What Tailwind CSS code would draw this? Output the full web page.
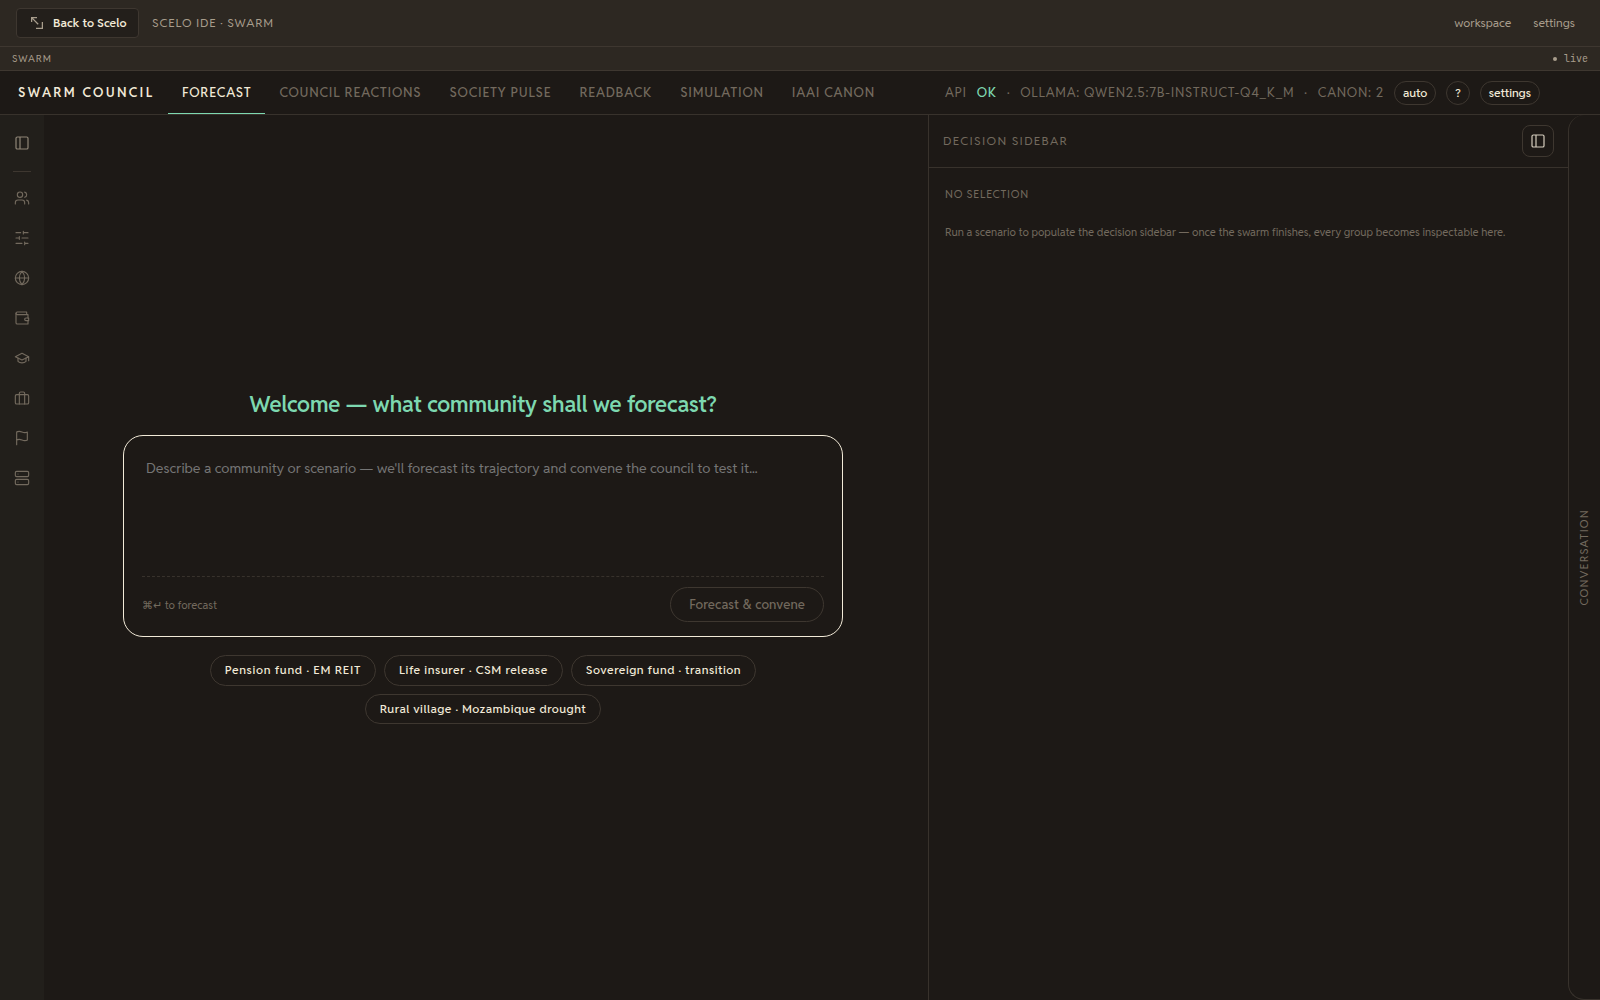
<!DOCTYPE html>
<html lang="en">
<head>
  <meta charset="UTF-8">
  <meta name="viewport" content="width=device-width, initial-scale=1.0">
  <title>Scelo IDE · Swarm</title>
  <script src="https://cdn.jsdelivr.net/npm/@tailwindcss/browser@4"></script>
</head>
<body class="h-screen overflow-hidden flex flex-col bg-[#1d1916] text-[#f2ead8] font-['Reddit_Sans','Roboto',sans-serif] text-xs">

  <!-- App header -->
  <header class="h-[47px] shrink-0 flex items-center justify-between bg-[#2d2822] border-b border-[#3e3730] pl-4 pr-[25px] text-[#a89d8c]">
    <div class="flex items-center gap-[13px]">
      <button class="h-[30px] w-[123px] flex items-center gap-[10px] pl-[14px] rounded border border-[#3e3730] bg-[#231f1b] text-[#f2ead8] font-semibold tracking-[0.005em]">
        <svg class="size-3 shrink-0" viewBox="0 0 12 12" fill="none" stroke="#a89d8c" stroke-width="1.3"><path d="M.6 5V.6H6M.9.9l6.3 6.3M11.4 5v6.4H5"/></svg>
        Back to Scelo
      </button>
      <span class="tracking-[0.067em]">SCELO IDE · SWARM</span>
    </div>
    <nav class="flex gap-[22px]">
      <a>workspace</a>
      <a>settings</a>
    </nav>
  </header>

  <div class="h-6 shrink-0 flex items-center justify-between bg-[#2d2822] border-b border-[#3e3730] px-3 text-[10px] text-[#a89d8c]">
    <span class="tracking-[0.08em]">SWARM</span>
    <span class="flex items-center gap-[7px] font-['JetBrains_Mono','Liberation_Mono',monospace]"><i class="size-1 rounded-full bg-[#a89d8c] mt-[2px]"></i>live</span>
  </div>

  <!-- Council tabs and status -->
  <div class="h-11 shrink-0 flex items-center justify-between border-b border-[#38322c] pl-[18px] pr-[60px] text-[13px] text-[#736a5e]">
    <div class="flex items-center h-full">
      <h1 class="w-[150px] font-semibold tracking-[0.176em] text-[#f2ead8]">SWARM COUNCIL</h1>
      <nav class="flex h-full font-medium tracking-[0.06em]">
        <a class="flex items-center px-[14px] pt-px border-b border-[#7dd8b0] text-[#f2ead8]">FORECAST</a>
        <a class="flex items-center px-[14px]">COUNCIL REACTIONS</a>
        <a class="flex items-center px-[14px]">SOCIETY PULSE</a>
        <a class="flex items-center px-[14px]">READBACK</a>
        <a class="flex items-center px-[14px]">SIMULATION</a>
        <a class="flex items-center px-[14px]">IAAI CANON</a>
      </nav>
    </div>
    <div class="flex items-center gap-[10px] tracking-[0.057em]">
      <span>API</span>
      <span class="font-medium text-[#7dd8b0]">OK</span>
      <span>·</span>
      <span>OLLAMA: QWEN2.5:7B-INSTRUCT-Q4_K_M</span>
      <span>·</span>
      <span>CANON: 2</span>
      <button class="h-6 px-2 rounded-full border border-[#3e3730] text-xs font-medium tracking-normal text-[#f2ead8]">auto</button>
      <button class="h-6 px-2 rounded-full border border-[#3e3730] text-xs font-medium tracking-normal text-[#f2ead8]">?</button>
      <button class="h-6 px-2 rounded-full border border-[#3e3730] text-xs font-medium tracking-normal text-[#f2ead8]">settings</button>
    </div>
  </div>

  <div class="flex-1 min-h-0 flex">
    <!-- Icon rail -->
    <aside class="w-11 shrink-0 flex flex-col items-center bg-[#221f1b] pt-3 text-[#736a5e]">
      <button class="size-8 grid place-items-center text-[#8f8577]">
        <svg class="size-4" viewBox="0 0 24 24" fill="none" stroke="currentColor" stroke-width="1.8"><rect x="3" y="3" width="18" height="18" rx="2"/><path d="M9 3v18"/></svg>
      </button>
      <div class="w-[18px] h-px bg-[#3e3730] mt-3 mb-[10px]"></div>
      <div class="flex flex-col gap-2">
        <button class="size-8 grid place-items-center">
          <svg class="size-4" viewBox="0 0 24 24" fill="none" stroke="currentColor" stroke-width="1.7" stroke-linecap="round" stroke-linejoin="round"><path d="M16 21v-2a4 4 0 0 0-4-4H6a4 4 0 0 0-4 4v2"/><circle cx="9" cy="7" r="4"/><path d="M22 21v-2a4 4 0 0 0-3-3.87M16 3.13a4 4 0 0 1 0 7.75"/></svg>
        </button>
        <button class="size-8 grid place-items-center">
          <svg class="size-4" viewBox="0 0 24 24" fill="none" stroke="currentColor" stroke-width="1.7" stroke-linecap="round" stroke-linejoin="round"><path d="M21 4h-7M10 4H3M21 12h-9M8 12H3M21 20h-5M12 20H3M14 2v4M8 10v4M16 18v4"/></svg>
        </button>
        <button class="size-8 grid place-items-center">
          <svg class="size-4" viewBox="0 0 24 24" fill="none" stroke="currentColor" stroke-width="1.7" stroke-linecap="round" stroke-linejoin="round"><circle cx="12" cy="12" r="10"/><path d="M12 2a14.5 14.5 0 0 0 0 20 14.5 14.5 0 0 0 0-20M2 12h20"/></svg>
        </button>
        <button class="size-8 grid place-items-center">
          <svg class="size-4" viewBox="0 0 24 24" fill="none" stroke="currentColor" stroke-width="1.7" stroke-linecap="round" stroke-linejoin="round"><path d="M21 12V7H5a2 2 0 0 1 0-4h14v4"/><path d="M3 5v14a2 2 0 0 0 2 2h16v-5"/><path d="M18 12a2 2 0 0 0 0 4h4v-4Z"/></svg>
        </button>
        <button class="size-8 grid place-items-center">
          <svg class="size-4" viewBox="0 0 24 24" fill="none" stroke="currentColor" stroke-width="1.7" stroke-linecap="round" stroke-linejoin="round"><path d="M22 10v6M2 10l10-5 10 5-10 5z"/><path d="M6 12v5c3 3 9 3 12 0v-5"/></svg>
        </button>
        <button class="size-8 grid place-items-center">
          <svg class="size-4" viewBox="0 0 24 24" fill="none" stroke="currentColor" stroke-width="1.7" stroke-linecap="round" stroke-linejoin="round"><rect x="2" y="7" width="20" height="14" rx="2"/><path d="M16 21V5a2 2 0 0 0-2-2h-4a2 2 0 0 0-2 2v16"/></svg>
        </button>
        <button class="size-8 grid place-items-center">
          <svg class="size-4" viewBox="0 0 24 24" fill="none" stroke="currentColor" stroke-width="1.7" stroke-linecap="round" stroke-linejoin="round"><path d="M4 15s1-1 4-1 5 2 8 2 4-1 4-1V3s-1 1-4 1-5-2-8-2-4 1-4 1zM4 22v-7"/></svg>
        </button>
        <button class="size-8 grid place-items-center">
          <svg class="size-4" viewBox="0 0 24 24" fill="none" stroke="currentColor" stroke-width="1.7" stroke-linecap="round" stroke-linejoin="round"><rect x="2" y="2" width="20" height="8" rx="2"/><rect x="2" y="14" width="20" height="8" rx="2"/><path d="M6 6h.01M6 18h.01"/></svg>
        </button>
      </div>
    </aside>

    <!-- Forecast prompt -->
    <main class="flex-1 min-w-0 flex flex-col items-center pt-[273px] pr-[6px]">
      <h2 class="text-[22px] leading-8 font-semibold tracking-[-0.005em] text-[#7dd8b0]">Welcome — what community shall we forecast?</h2>
      <div class="mt-[15px] w-[720px] h-[202px] flex flex-col rounded-[20px] border border-[#f2ead8] px-[18px] pb-[14px]">
        <div class="flex-1 pt-[22px] pl-1 text-sm leading-[21px] text-[#757575]">Describe a community or scenario — we'll forecast its trajectory and convene the council to test it...</div>
        <div class="flex items-center justify-between border-t border-dashed border-[#38322c] pt-[10px]">
          <span class="pt-[2px] text-[11px] text-[#736a5e]">⌘↵ to forecast</span>
          <button class="h-[35px] px-[18px] rounded-full border border-[#3e3730] text-[13px] font-medium tracking-[0.009em] text-[#736a5e]">Forecast &amp; convene</button>
        </div>
      </div>
      <div class="mt-[18px] w-[560px] flex flex-wrap justify-center gap-2 font-medium">
        <button class="h-[30.5px] px-[14px] rounded-full border border-[#3e3730] tracking-[0.056em]">Pension fund · EM REIT</button>
        <button class="h-[30.5px] px-[14px] rounded-full border border-[#3e3730] tracking-[0.049em]">Life insurer · CSM release</button>
        <button class="h-[30.5px] px-[14px] rounded-full border border-[#3e3730] tracking-[0.043em]">Sovereign fund · transition</button>
        <button class="h-[30.5px] px-[14px] rounded-full border border-[#3e3730] tracking-[0.04em]">Rural village · Mozambique drought</button>
      </div>
    </main>

    <!-- Decision sidebar -->
    <section class="w-[640px] shrink-0 border-l border-[#38322c]">
      <div class="h-[53px] flex items-center justify-between border-b border-[#38322c] px-[14px]">
        <span class="tracking-[0.108em] text-[#736a5e]">DECISION SIDEBAR</span>
        <button class="size-8 grid place-items-center rounded-lg border border-[#3e3730] text-[#d6cebe]">
          <svg class="size-4" viewBox="0 0 24 24" fill="none" stroke="currentColor" stroke-width="1.8"><rect x="3" y="3" width="18" height="18" rx="2"/><path d="M9 3v18"/></svg>
        </button>
      </div>
      <div class="px-4 pt-[18px] text-[11px] text-[#736a5e]">
        <p class="leading-4 tracking-[0.065em]">NO SELECTION</p>
        <p class="mt-[22px] leading-4">Run a scenario to populate the decision sidebar — once the swarm finishes, every group becomes inspectable here.</p>
      </div>
    </section>

    <aside class="w-8 shrink-0 grid place-items-center rounded-l-2xl border border-r-0 border-t-0 border-[#38322c]">
      <span class="rotate-180 [writing-mode:vertical-rl] text-[11px] tracking-[0.11em] text-[#736a5e]">CONVERSATION</span>
    </aside>
  </div>

</body>
</html>
